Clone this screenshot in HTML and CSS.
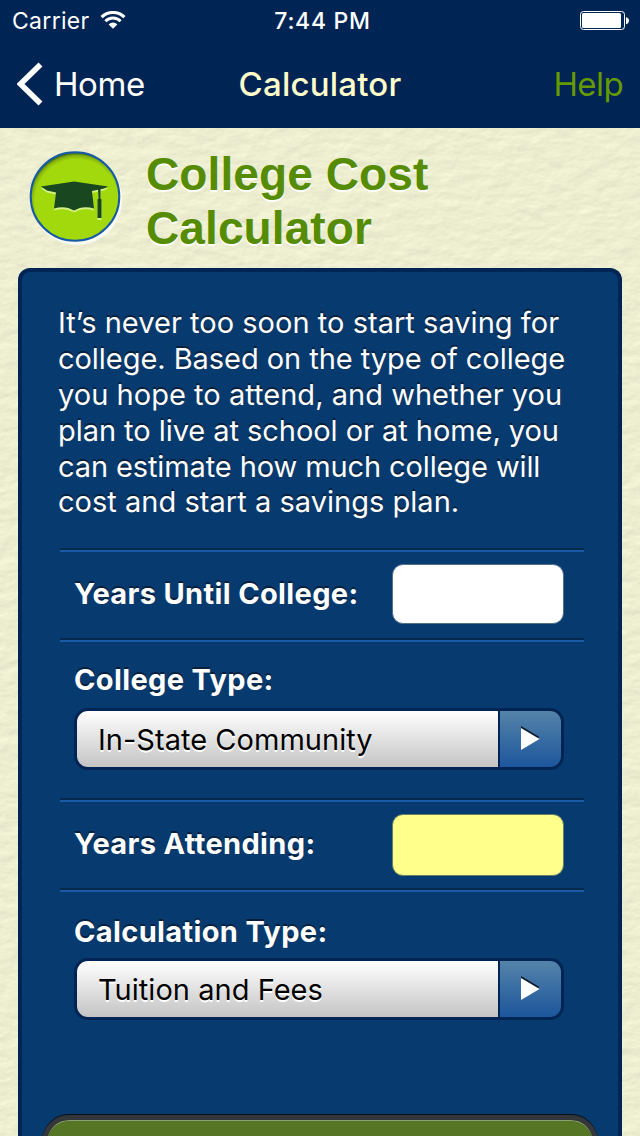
FILE: index.html
```html
<!DOCTYPE html>
<html lang="en">
<head>
    <meta charset="UTF-8">
    <meta name="viewport" content="width=device-width, initial-scale=1.0">
    <link rel="stylesheet" href="styles.css">
    <title>College Cost Calculator</title>
</head>
<body>

    <div class="topbar">
        <div class="status">
            <div class="carrier">
                <span>Carrier</span>
                <svg class="wifi" width="26" height="18" viewBox="0 0 26 18">
                    <path d="M1.600 6.200a16.200 16.200 0 0 1 22.800 0" fill="none" stroke="#fff" stroke-width="3.200"/>
                    <path d="M5.400 10.200a10.700 10.700 0 0 1 15.200 0" fill="none" stroke="#fff" stroke-width="2.900"/>
                    <path d="M8.600 13.400a6.200 6.200 0 0 1 8.800 0L13 17.800z" fill="#fff"/>
                </svg>
            </div>
            <span class="clock">7:44 PM</span>
            <svg class="battery" width="50" height="20" viewBox="0 0 50 20">
                <rect x=".5" y=".5" width="44" height="18" rx="3" fill="none" stroke="#fff"/>
                <rect x="2" y="2" width="39" height="15" rx="1.5" fill="#fff"/>
                <path d="M46 6.300c4 .6 4 6.300 0 6.900z" fill="#fff"/>
            </svg>
        </div>
        <div class="nav">
            <a class="back">
                <svg width="26" height="44" viewBox="0 0 26 44">
                    <path d="M23.500 2.500L3.500 22L23.500 41.500" fill="none" stroke="#fff" stroke-width="5.600"/>
                </svg>
                <span>Home</span>
            </a>
            <span class="nav-title">Calculator</span>
            <a class="help">Help</a>
        </div>
    </div>

    <div class="page">
        <div class="heading">
            <svg class="badge" width="96" height="96" viewBox="0 0 96 96">
                <defs>
                    <radialGradient id="disc" cx=".52" cy=".55" r=".54">
                        <stop offset=".87" stop-color="#a2d90c"/>
                        <stop offset=".95" stop-color="#84b30d"/>
                        <stop offset="1" stop-color="#496c10"/>
                    </radialGradient>
                </defs>
                <circle cx="48" cy="50" r="45" fill="#fff" opacity=".8"/>
                <circle cx="46" cy="46.500" r="44.300" fill="url(#disc)" stroke="#165ba3" stroke-width="2"/>
                <g fill="#d3f184" transform="translate(0 2)">
                    <path d="M12 36.500L45 31.500L79 36.500L75 38.500L63 41L65 58.500Q54 55 45 60.500Q36 55 25 58.500L27 42.500L18 40.500z"/>
                    <path d="M69 39h2.500v9.500l1 1v18.500h-4V49.500l1-1z"/>
                </g>
                <g fill="#19471f">
                    <path d="M12 36.500L45 31.500L79 36.500L75 38.500L63 41L65 58.500Q54 55 45 60.500Q36 55 25 58.500L27 42.500L18 40.500z"/>
                    <path d="M69 39h2.500v9.500l1 1v18.500h-4V49.500l1-1z"/>
                </g>
            </svg>
            <h1>College Cost<br>Calculator</h1>
        </div>

        <div class="panel">
            <p class="intro">
                <span>It’s never too soon to start saving for</span>
                <span class="tight">college. Based on the type of college</span>
                <span>you hope to attend, and whether you</span>
                <span class="tight">plan to live at school or at home, you</span>
                <span class="tighter">can estimate how much college will</span>
                <span>cost and start a savings plan.</span>
            </p>

            <div class="field inline">
                <label for="until">Years Until College:</label>
                <input id="until" type="text">
            </div>
            <div class="field stacked college">
                <label>College Type:</label>
                <div class="select">
                    <span class="value">In-State Community</span>
                    <span class="arrow">
                        <svg width="19" height="26" viewBox="0 0 19 26"><path d="M0 0L18.500 11L0 22z" fill="#0b1b2b"/><path d="M0 2L18.500 13L0 24z" fill="#fff"/></svg>
                    </span>
                </div>
            </div>
            <div class="field inline">
                <label for="attending">Years Attending:</label>
                <input id="attending" class="required" type="text">
            </div>
            <div class="field stacked calculation">
                <label>Calculation Type:</label>
                <div class="select">
                    <span class="value">Tuition and Fees</span>
                    <span class="arrow">
                        <svg width="19" height="26" viewBox="0 0 19 26"><path d="M0 0L18.500 11L0 22z" fill="#0b1b2b"/><path d="M0 2L18.500 13L0 24z" fill="#fff"/></svg>
                    </span>
                </div>
            </div>

            <div class="submit"></div>
        </div>
    </div>

</body>
</html>
```
FILE: styles.css
```css
* {
    box-sizing: border-box;
}

body {
    margin: 0;
    height: 1136px;
    overflow: hidden;
    display: flex;
    flex-direction: column;
    font-family: Inter, "Liberation Sans", sans-serif;
    color: #fff;
}

.topbar {
    height: 128px;
    flex: none;
    background: #002454;
}

.status {
    height: 40px;
    padding: 1px 10px 0 12px;
    display: grid;
    grid-template-columns: 1fr auto 1fr;
    align-items: center;
    font-size: 23px;
}

.carrier {
    display: flex;
    align-items: center;
    gap: 10px;
    letter-spacing: 0.3px;
}

.wifi {
    margin-top: -1px;
}

.clock {
    padding-left: 3px;
    font-weight: 500;
    letter-spacing: 0.7px;
}

.battery {
    justify-self: end;
}

.nav {
    height: 88px;
    padding: 0 17px;
    display: grid;
    grid-template-columns: 1fr auto 1fr;
    align-items: center;
    font-size: 33px;
}

.back {
    display: flex;
    align-items: center;
    gap: 11px;
    letter-spacing: -0.4px;
}

.nav-title {
    font-weight: 500;
    letter-spacing: 0.2px;
    color: #ffffcc;
}

.help {
    justify-self: end;
    letter-spacing: -0.6px;
    color: #669900;
}

/* paper grain */
.page {
    flex: 1;
    min-height: 0;
    padding: 0 18px;
    display: flex;
    flex-direction: column;
    background-color: #eeeed2;
    background-image: url("data:image/svg+xml,%3Csvg xmlns='http://www.w3.org/2000/svg' width='640' height='1008'%3E%3Cfilter id='p' x='0' y='0' width='100%25' height='100%25' color-interpolation-filters='sRGB'%3E%3CfeTurbulence type='fractalNoise' baseFrequency='.045 .08' numOctaves='5' seed='9'/%3E%3CfeDiffuseLighting lighting-color='%23efefd2' surfaceScale='.34' diffuseConstant='1.17'%3E%3CfeDistantLight azimuth='240' elevation='58'/%3E%3C/feDiffuseLighting%3E%3C/filter%3E%3Crect width='640' height='1008' filter='url(%23p)'/%3E%3C/svg%3E");
}

.heading {
    height: 140px;
    flex: none;
    display: flex;
    padding: 22px 0 0 11px;
}

.badge {
    flex: none;
}

h1 {
    margin: -3px 0 0 21px;
    font: bold 46px/54px "Liberation Sans", sans-serif;
    letter-spacing: 0.1px;
    color: #558c03;
    text-shadow: 0 2px 0 #fff;
}

.panel {
    flex: 1;
    min-height: 0;
    overflow: hidden;
    padding: 33px 34px 0 38px;
    border: 4px solid #002454;
    border-bottom: 0;
    border-radius: 12px 12px 0 0;
    background: #073b70;
}

.intro {
    margin: 0;
    height: 243px;
    font-size: 29px;
    line-height: 35.88px;
    text-shadow: 0 -2px 0 #06203c;
}

.intro span {
    display: block;
    width: max-content;
    margin-left: -2px;
    letter-spacing: 0.03px;
}

.intro .tight {
    letter-spacing: -0.05px;
}

.intro .tighter {
    letter-spacing: -0.11px;
}

.field {
    border-top: 2px solid #04294f;
    background: linear-gradient(#165ba3, #165ba3) top / 100% 2px no-repeat;
}

.field label {
    font-size: 29px;
    font-weight: 700;
    line-height: 36px;
    letter-spacing: 0.36px;
    text-shadow: 0 -2px 0 #06203c;
}

.inline {
    height: 90px;
    padding: 14px 20px 0 14px;
    display: flex;
    justify-content: space-between;
}

.inline label {
    margin-top: 12px;
}

input {
    width: 172px;
    height: 60px;
    border: 1px solid #51718d;
    border-radius: 11px;
    background: #fff;
}

input.required {
    height: 62px;
    border-color: #648065;
    background: #ffff8c;
}

.stacked {
    padding: 22px 20px 0 14px;
    display: flex;
    flex-direction: column;
}

.college {
    height: 160px;
}

.college .select {
    margin-top: 10px;
}

.calculation {
    height: 224px;
    padding-top: 24px;
}

.calculation .select {
    margin-top: 8px;
}

.select {
    height: 62px;
    display: flex;
    border: 3px solid #002454;
    border-radius: 14px;
    overflow: hidden;
    background: #002454;
}

.value {
    flex: 1;
    padding-left: 21px;
    font-size: 29px;
    line-height: 58px;
    letter-spacing: 0.03px;
    color: #000;
    text-shadow: 0 2px 0 #fff;
    background: linear-gradient(#fff, #c4c4c4);
}

.arrow {
    width: 61px;
    margin-left: 2px;
    display: flex;
    align-items: center;
    justify-content: center;
    padding-right: 1px;
    background: linear-gradient(#5583a9, #1c569c);
}

/* continues below the fold */
.submit {
    width: 556px;
    height: 90px;
    margin: 3px 0 0 -18px;
    border: 5px solid #33373b;
    border-radius: 27px;
    background: #577625;
    box-shadow: inset 0 1px 0 #8ba072, inset 0 0 0 1px #465c2a, 0 -1px 0 #0b1014;
}
```
